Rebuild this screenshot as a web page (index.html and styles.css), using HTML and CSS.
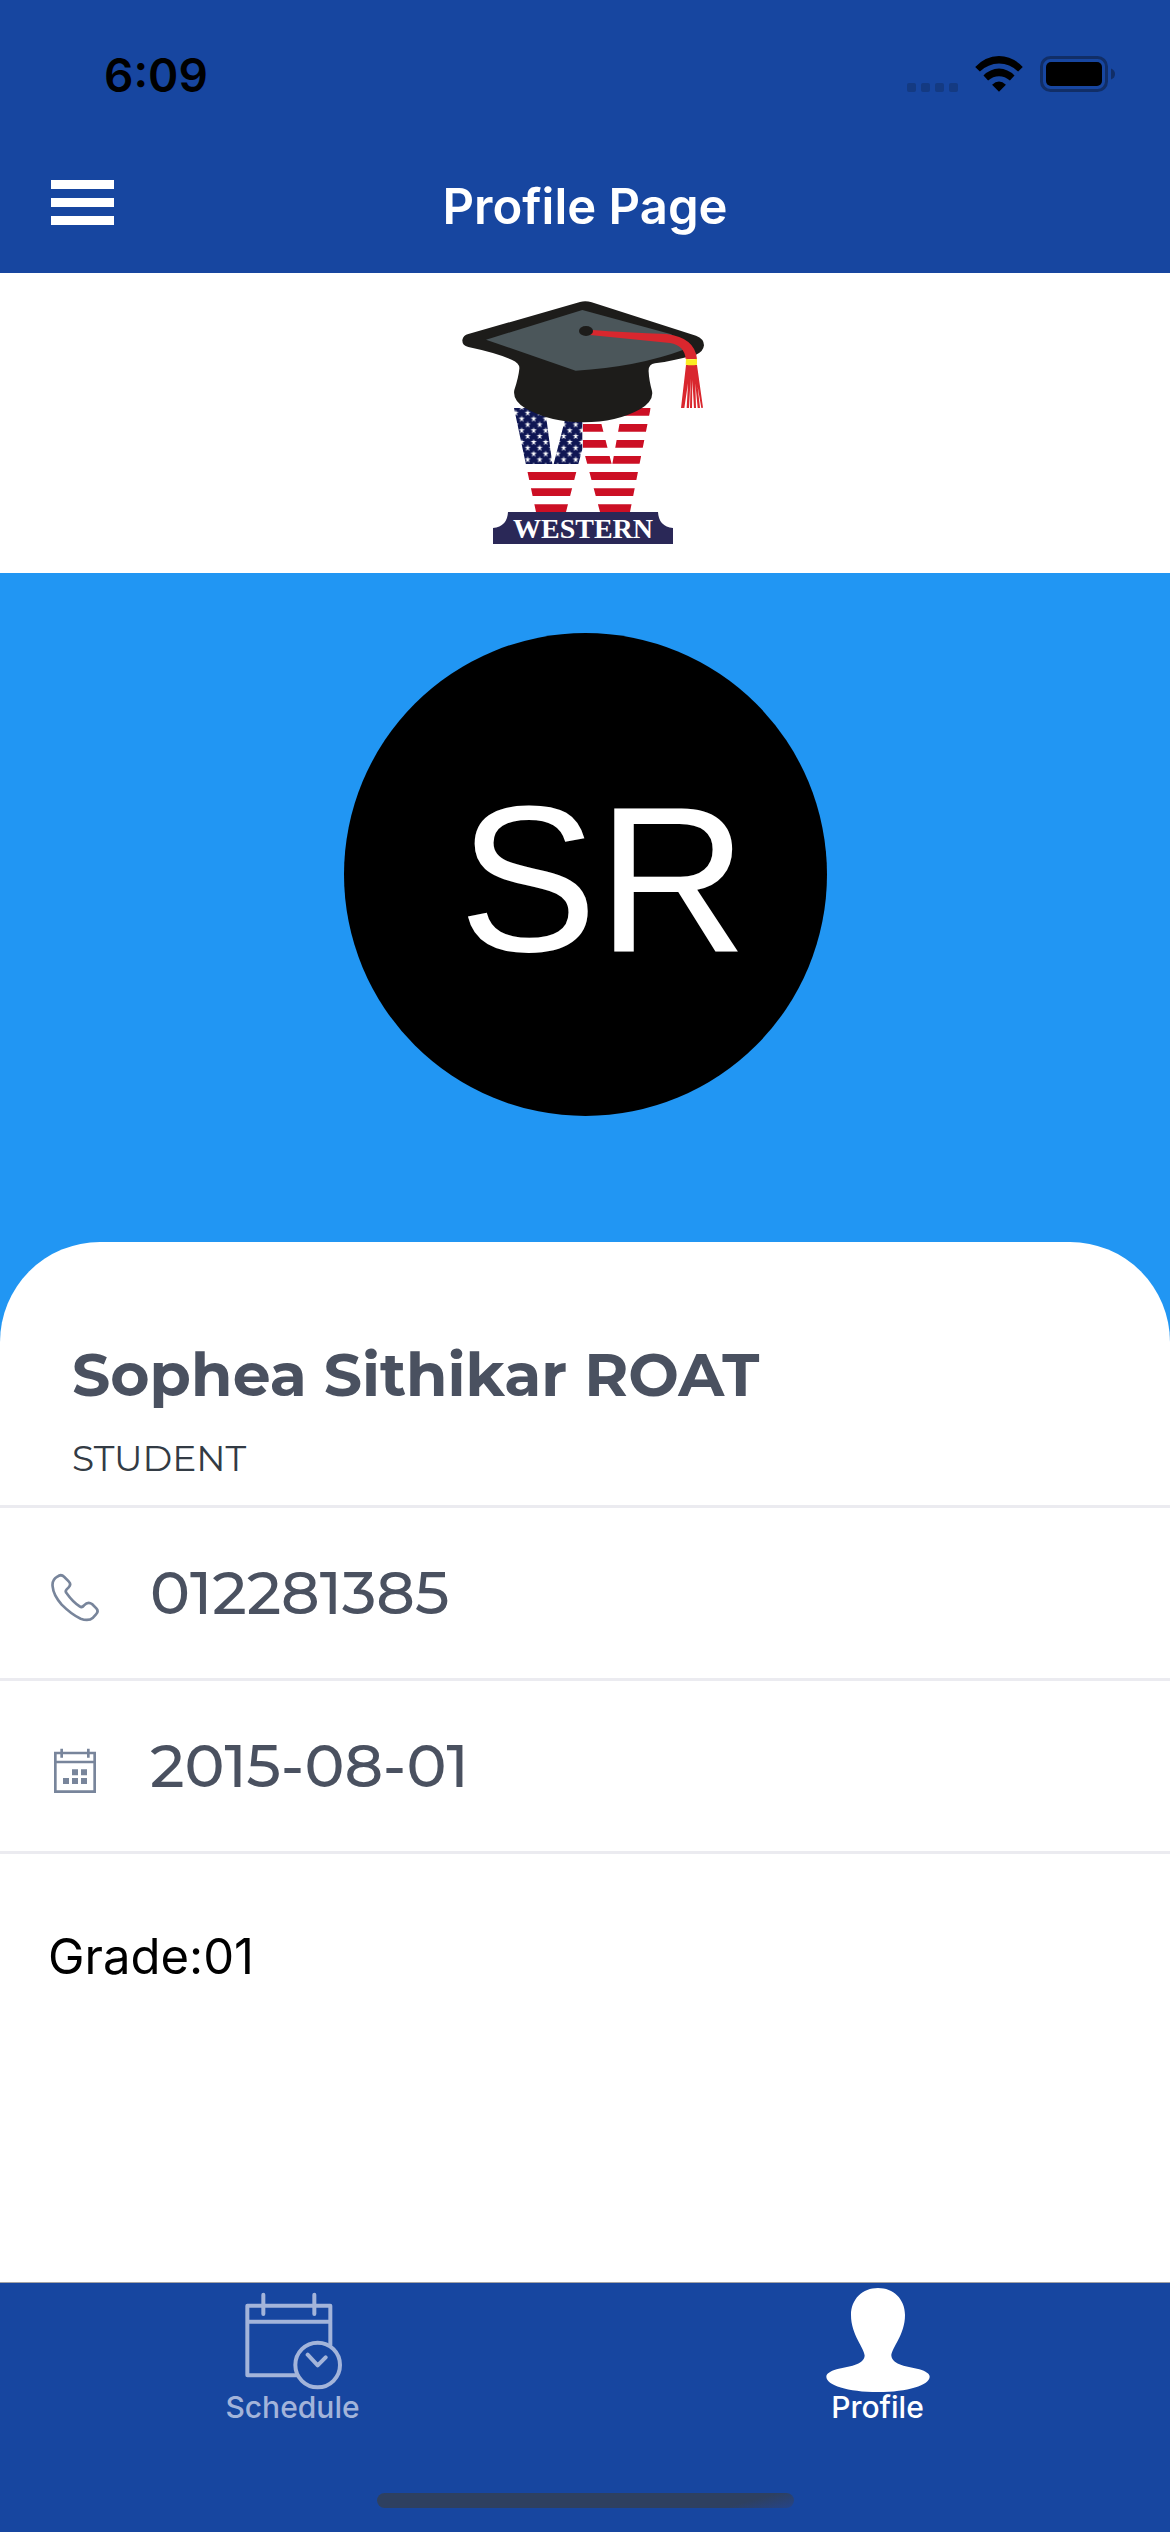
FILE: index.html
```html
<!DOCTYPE html>
<html lang="en">
<head>
<meta charset="utf-8">
<meta name="viewport" content="width=device-width, initial-scale=1">
<title>Profile Page</title>
<link rel="stylesheet" href="styles.css">
</head>
<body>
<header class="header">
  <div class="status">
    <span class="status-time">6:09</span>
    <div class="status-icons">
      <svg class="signal" viewBox="0 0 51 9" aria-hidden="true"><rect width="9" height="9" rx="2"/><rect x="14" width="9" height="9" rx="2"/><rect x="28" width="9" height="9" rx="2"/><rect x="42" width="9" height="9" rx="2"/></svg>
      <svg class="wifi" viewBox="375 75 144 109" aria-hidden="true"><path d="M375 108Q405 76 447 75Q489 76 519 108L505 122Q480 99 447 98Q414 99 389 122ZM400 134Q420 114 447 113Q474 114 494 134L480 149Q465 136 447 136Q429 136 414 149ZM426 162Q447 142 468 162L447 183Z"/></svg>
      <svg class="battery" viewBox="0 0 75 36" aria-hidden="true"><rect x="1.500" y="1.500" width="65" height="33" rx="9" fill="none" stroke="#112e67" stroke-width="3"/><rect x="6" y="6" width="56" height="24" rx="5"/><path d="M71 12.500Q75 14 75 18T71 23.500Z" fill="#112e67"/></svg>
    </div>
  </div>
  <div class="nav">
    <button class="menu" type="button" aria-label="Menu"><svg class="menu-icon" viewBox="0 0 63 54" fill="#fff"><path d="M0 0H63V9H0ZM0 18H63V27H0ZM0 36H63V45H0Z"/></svg></button>
    <h1 class="title">Profile Page</h1>
  </div>
</header>
<main class="main">
  <div class="brand">
    <svg class="logo" viewBox="0 0 870 840" role="img" aria-label="Western">
      <defs>
        <pattern id="stars" x="236" y="407" width="36" height="35" patternUnits="userSpaceOnUse">
          <rect width="36" height="35" fill="#0f1653"/>
          <path id="star" fill="#fff" d="M9 0L11 6H18L12 11L15 18L9 14L3 18L6 11L0 6H7Z"/>
          <use href="#star" x="18" y="17"/>
        </pattern>
        <clipPath id="left"><path d="M222 384H315L337 552H341L384 384H428V505L415 552L378 696H288Z"/></clipPath>
        <clipPath id="right"><path d="M428 384H472L515 552H517L547 384H632L570 696H480L428 500Z"/></clipPath>
      </defs>
      <g clip-path="url(#left)">
        <rect x="220" y="384" width="208" height="168" fill="url(#stars)"/>
        <path fill="#cc0f24" d="M220 576H428V600H220ZM220 625H428V648H220ZM220 673H428V696H220Z"/>
      </g>
      <path clip-path="url(#right)" fill="#cc0f24" d="M428 384H640V407H428ZM428 432H640V455H428ZM428 480H640V503H428ZM428 528H640V551H428ZM428 576H640V600H428ZM428 625H640V648H428ZM428 673H640V696H428Z"/>
      <path fill="#1d1c1a" d="M420 66Q437 61 455 67L768 167Q792 176 792 196Q790 215 768 224Q700 242 645 250Q624 253 626 276Q627 300 636 333Q642 362 600 388Q530 427 430 427Q330 427 255 384Q217 360 223 330Q236 290 238 266Q240 250 215 239Q170 219 85 201Q66 197 67 180Q70 165 85 162Z"/>
      <path fill="#4b565a" d="M427 90L138 179L407 272Q590 262 735 208L694 163Z"/>
      <path fill="#d9272e" d="M450 149Q560 158 680 162Q765 173 771 237H737Q734 197 690 189L450 165ZM738 255H771L789 383L784 384L773 320L780 384H773L766 310L768 384H762L757 300L756 384H750L752 295L747 384H740L744 310L733 384H723Z"/>
      <path fill="#fbec23" d="M738 236Q755 240 771 236V254Q755 258 737 254Z"/>
      <ellipse cx="438" cy="153" rx="21" ry="15" fill="#1d1c1a"/>
      <path fill="#2a2857" d="M204 696H654Q656 740 699 744V792H159V744Q202 740 204 696Z"/>
      <text class="logo-text" x="429" y="773" text-anchor="middle">WESTERN</text>
    </svg>
  </div>
  <div class="hero">
    <div class="avatar">SR</div>
  </div>
  <section class="card">
    <div class="identity">
      <h2 class="name">Sophea Sithikar ROAT</h2>
      <p class="role">STUDENT</p>
    </div>
    <div class="row">
      <svg class="row-icon" viewBox="150 189 156 180" fill="none" stroke="#78859b" stroke-width="8" stroke-linejoin="round" aria-hidden="true"><path d="M158 260Q155 240 172 230Q183 221 193 231L206 244Q215 253 206 262L200 268Q194 274 201 281Q218 305 239 319Q246 324 252 316Q264 303 276 312L289 325Q297 334 288 343L279 353Q266 365 242 356Q216 345 185 314Q160 285 158 260Z"/></svg>
      <span class="row-text">012281385</span>
    </div>
    <div class="row">
      <svg class="row-icon" viewBox="150 708 156 180" fill="none" stroke="#78859b" stroke-width="8" aria-hidden="true"><path d="M166 759H284V875H166ZM166 786H284M185 746V773M265 746V773"/><path fill="#78859b" stroke="none" d="M216 808H234V826H216ZM243 808H261V826H243ZM189 834H207V852H189ZM216 834H234V852H216ZM243 834H261V852H243Z"/></svg>
      <span class="row-text">2015-08-01</span>
    </div>
    <p class="grade">Grade:01</p>
  </section>
</main>
<footer class="footer">
  <nav class="tabs">
    <a class="tab" href="#schedule">
      <svg class="tab-icon" viewBox="122 54 312 312" fill="none" stroke="currentColor" stroke-width="12" stroke-linecap="round" stroke-linejoin="round" aria-hidden="true"><path d="M290 316H141V107H390V225M141 155H390M189 74V132M342 74V132M322 254L352 286L376 262"/><circle cx="352" cy="285" r="67"/></svg>
      Schedule
    </a>
    <a class="tab tab-active" href="#profile" aria-current="page">
      <svg class="tab-icon" viewBox="255 54 312 312" fill="currentColor" aria-hidden="true"><path d="M411 54C457 54 492 87 492 135C492 195 451 235 451 257C455 285 500 289 535 298C555 304 566 312 566 320C566 345 500 366 411 366C320 366 256 345 256 320C256 312 267 304 287 298C322 289 368 285 371 257C371 235 330 195 330 135C330 87 365 54 411 54Z"/></svg>
      Profile
    </a>
  </nav>
  <div class="home-bar"></div>
</footer>
</body>
</html>
```
FILE: styles.css
```css
* {
  box-sizing: border-box;
}

body {
  margin: 0;
  min-height: 100vh;
  display: flex;
  flex-direction: column;
  background: #fff;
  color: #000;
  font-family: Inter, "Liberation Sans", sans-serif;
}

h1,
h2,
p {
  margin: 0;
}

svg {
  display: block;
  flex: none;
}

.header {
  background: #1746a0;
}

.status {
  display: flex;
  justify-content: space-between;
  align-items: flex-start;
  height: 141px;
  padding: 45px 55px 0 104px;
}

.status-time {
  font-size: 46px;
  font-weight: 600;
  line-height: 60px;
}

.status-icons {
  display: flex;
  align-items: flex-end;
  gap: 17px;
  padding-top: 11px;
}

.signal {
  width: 51px;
  height: 9px;
  fill: #143a82;
}

.wifi {
  width: 48px;
  height: 36px;
}

.battery {
  width: 75px;
  height: 36px;
}

.nav {
  display: grid;
  grid-template-columns: 1fr auto 1fr;
  align-items: center;
  height: 132px;
  padding: 0 51px;
}

.menu {
  justify-self: start;
  padding: 0;
  border: 0;
  background: none;
}

.menu-icon {
  width: 63px;
  height: 54px;
}

.title {
  color: #fff;
  font-size: 49px;
  font-weight: 600;
  line-height: 60px;
}

.main {
  flex: 1;
}

.brand {
  display: flex;
  justify-content: center;
  padding: 7px 0 13px;
}

.logo {
  width: 290px;
  height: 280px;
}

.logo-text {
  fill: #fff;
  font-family: "Liberation Serif", serif;
  font-size: 84px;
  font-weight: 700;
}

.hero {
  display: flex;
  justify-content: center;
  padding: 60px 0 226px;
  background: #2196f3;
}

.avatar {
  display: flex;
  align-items: center;
  justify-content: center;
  width: 483px;
  height: 483px;
  padding: 8px 0 0 36px;
  border-radius: 50%;
  background: #000;
  color: #fff;
  font-family: "Liberation Sans", sans-serif;
  font-size: 208px;
  line-height: 208px;
}

.card {
  margin-top: -100px;
  border-radius: 100px 100px 0 0;
  background: #fff;
}

.identity {
  display: flex;
  flex-direction: column;
  gap: 23px;
  padding: 97px 72px 23px;
}

.name {
  color: #4a5160;
  font-family: Montserrat, Inter, sans-serif;
  font-size: 60px;
  font-weight: 700;
  line-height: 72px;
}

.role {
  color: #333b44;
  font-family: Montserrat, Inter, sans-serif;
  font-size: 36px;
  line-height: 48px;
}

.row {
  display: flex;
  align-items: center;
  gap: 48px;
  height: 173px;
  padding-left: 50px;
  border-top: 3px solid #ebebf0;
}

.row-icon {
  width: 52px;
  height: 60px;
}

.row-text {
  color: #4a5160;
  font-family: Montserrat, Inter, sans-serif;
  font-size: 60px;
  font-weight: 500;
  line-height: 72px;
}

.grade {
  padding: 73px 48px;
  border-top: 3px solid #ebebf0;
  font-size: 49px;
  line-height: 60px;
}

.footer {
  display: flex;
  flex-direction: column;
  justify-content: space-between;
  align-items: center;
  height: 250px;
  padding: 5px 0 24px;
  border-top: 1px solid #a3a3a6;
  background: #1746a0;
}

.tabs {
  display: flex;
  width: 100%;
}

.tab {
  flex: 1;
  display: flex;
  flex-direction: column;
  align-items: center;
  color: #a3b4da;
  font-size: 30px;
  font-weight: 500;
  line-height: 30px;
  text-decoration: none;
}

.tab-active {
  color: #fff;
}

.tab-icon {
  width: 104px;
  height: 104px;
}

.home-bar {
  width: 417px;
  height: 15px;
  border-radius: 8px;
  background: linear-gradient(165deg, #2e4060 85%, #24448a);
}
```
